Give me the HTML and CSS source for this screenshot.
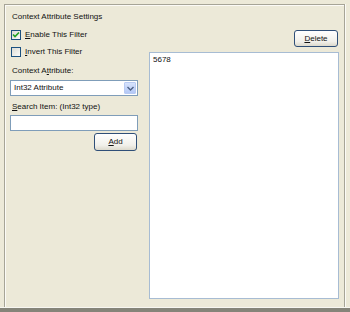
FILE: index.html
```html
<!DOCTYPE html>
<html lang="en">
<head>
    <meta charset="UTF-8">
    <title>Context Attribute Settings</title>
    <link rel="stylesheet" href="styles.css">
</head>
<body>
    <div class="page">
        <div class="frame">
            <div class="title">Context Attribute Settings</div>
            <div class="cols">
                <div class="left">
                    <label class="check">
                        <span class="box checked">
                            <svg width="8" height="8" viewBox="0 0 8 8"><path d="M1 3.5 L3 5.5 L7 1.5" fill="none" stroke="#21a121" stroke-width="1.6"/></svg>
                        </span>
                        <span><u>E</u>nable This Filter</span>
                    </label>
                    <label class="check second">
                        <span class="box"></span>
                        <span><u>I</u>nvert This Filter</span>
                    </label>
                    <div class="lbl ctx">Context A<u>t</u>tribute:</div>
                    <div class="select">
                        <span class="val">Int32 Attribute</span>
                        <span class="drop">
                            <svg width="7" height="5" viewBox="0 0 7 5"><path d="M0.5 1 L3.5 4 L6.5 1" fill="none" stroke="#4d6185" stroke-width="1.4"/></svg>
                        </span>
                    </div>
                    <div class="lbl search"><u>S</u>earch Item: (Int32 type)</div>
                    <div class="input"></div>
                    <div class="btn-row">
                        <div class="btn add"><u>A</u>dd</div>
                    </div>
                </div>
                <div class="right">
                    <div class="btn-row">
                        <div class="btn del"><u>D</u>elete</div>
                    </div>
                    <div class="list">
                        <div class="item">5678</div>
                    </div>
                </div>
            </div>
        </div>
        <div class="bottom"></div>
    </div>
</body>
</html>
```

FILE: styles.css
```css
* {
    margin: 0;
    padding: 0;
    box-sizing: border-box;
}
body {
    background: #ece9d8;
    font-family: "Liberation Sans", Arial, sans-serif;
    font-size: 8px;
    color: #111;
}
.page {
    width: 350px;
    height: 312px;
    display: flex;
    flex-direction: column;
}
.frame {
    flex: 1;
    margin: 4px 5px 0 4px;
    border-top: 1px solid #a6a497;
    border-left: 1px solid #a6a497;
    border-right: 1px solid #a6a497;
    box-shadow: inset 1px 1px 0 #fbfaf6, 1px 0 0 #fbfaf6;
    padding: 7px 5px 0 6px;
}
.bottom {
    height: 5px;
    border-top: 1px solid #f7f6f0;
    background: #858479;
}
.title {
    height: 10px;
    line-height: 10px;
    margin-left: 1px;
}
.cols {
    display: grid;
    grid-template-columns: 128px 190px;
    column-gap: 11px;
    margin-top: 8px;
    margin-left: -1px;
}
.check {
    display: flex;
    align-items: center;
    gap: 4px;
    height: 10px;
    line-height: 10px;
    margin-left: 1px;
}
.check.second {
    margin-top: 7px;
}
.box {
    width: 10px;
    height: 10px;
    border: 1px solid #1c5180;
    background: linear-gradient(135deg, #dcdcd5, #fbfbf9);
    display: flex;
    align-items: center;
    justify-content: center;
}
.lbl {
    height: 10px;
    line-height: 10px;
    margin-left: 2px;
}
.lbl.ctx {
    margin-top: 9px;
}
.lbl.search {
    margin-top: 6px;
}
.select {
    margin-top: 4px;
    height: 16px;
    border: 1px solid #7f9db9;
    background: #fff;
    display: flex;
    align-items: center;
    justify-content: space-between;
    padding: 1px;
}
.select .val {
    padding-left: 2px;
    line-height: 12px;
}
.drop {
    width: 12px;
    height: 12px;
    background: linear-gradient(#d7e3fc, #b4c8f6);
    border: 1px solid #b9cbf3;
    border-radius: 1px;
    display: flex;
    align-items: center;
    justify-content: center;
}
.input {
    margin-top: 3px;
    height: 16px;
    border: 1px solid #7f9db9;
    background: #fff;
}
.btn-row {
    display: flex;
    justify-content: flex-end;
}
.btn {
    height: 18px;
    line-height: 16px;
    text-align: center;
    border: 1px solid #2f4f78;
    border-radius: 3px;
    background: linear-gradient(#ffffff, #f1f0ea 70%, #dcd9cc);
    margin-right: 1px;
}
.btn.add {
    width: 43px;
    margin-top: 2px;
}
.btn.del {
    width: 44px;
    height: 17px;
    line-height: 15px;
}
.list {
    margin-top: 5px;
    height: 247px;
    border: 1px solid #a7bcd3;
    background: #fff;
    padding: 2px 3px;
}
.item {
    line-height: 10px;
}
```
